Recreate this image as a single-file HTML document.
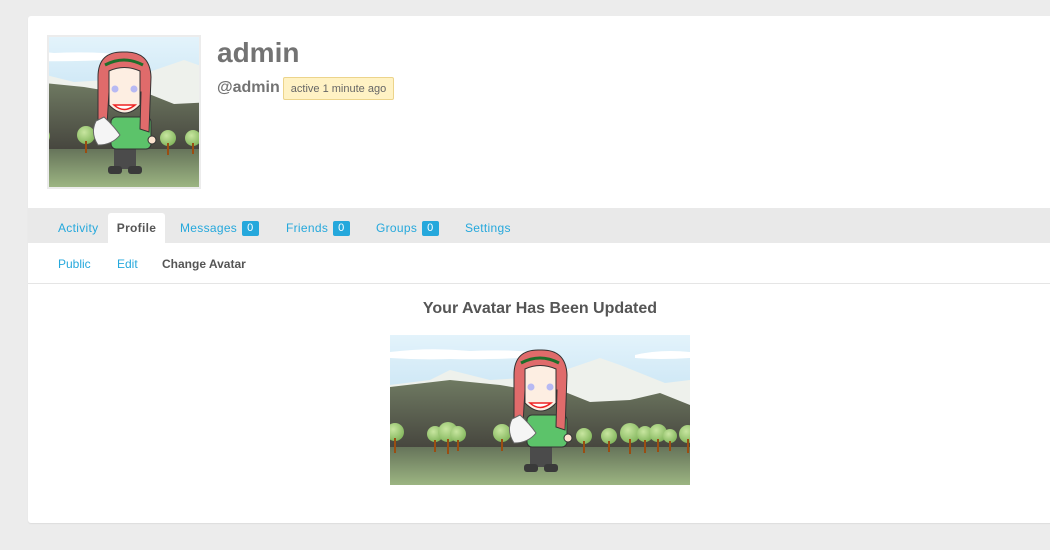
<!DOCTYPE html>
<html><head><meta charset="utf-8"><style>
body{margin:0;background:#ececec;font-family:"Liberation Sans",sans-serif;width:1050px;height:550px;overflow:hidden;position:relative}
.card{position:absolute;left:28px;top:16px;width:1040px;height:507px;background:#fff;border-radius:3px;box-shadow:0 1px 1px #ddd}
.av{position:absolute;left:19px;top:19px;width:150px;height:150px;border:2px solid #ececec}
.name{position:absolute;left:189px;top:21px;font-size:28px;font-weight:bold;color:#737373}
.handle{position:absolute;left:189px;top:63px;font-size:16px;font-weight:bold;color:#737373}
.badge{position:absolute;left:255px;top:61px;width:109px;height:21px;background:#fff2c4;border:1px solid #ecd48b;border-radius:2px;font-size:11px;color:#666;text-align:center;line-height:22px}
.nav{position:absolute;left:0;top:192px;width:1040px;height:35px;background:#e9e9e9}
.nav .t{position:absolute;top:0;font-size:12px;color:#25a8dc;line-height:41px;letter-spacing:.3px;white-space:nowrap}
.nav .act{background:#fff;color:#555;font-weight:bold;top:5px;line-height:30px;height:30px;border-radius:3px 3px 0 0;width:57px;text-align:center;left:80px}
.cnt{display:inline-block;background:#25a8dc;color:#fff;border-radius:2px;padding:0 5px;line-height:15px;margin-left:5px;font-size:11px;vertical-align:1px}
.sub span{position:absolute;top:241px;font-size:12px;color:#25a8dc}
.line{position:absolute;left:0;top:267px;width:1040px;height:1px;background:#e5e5e5}
h2{position:absolute;left:0;width:1024px;text-align:center;top:284px;margin:0;font-size:16px;font-weight:bold;color:#555}
.big{position:absolute;left:362px;top:319px;width:300px;height:150px}
</style></head><body>
<svg width="0" height="0" style="position:absolute"><defs>
<linearGradient id="sky" x1="0" y1="0" x2="0" y2="1"><stop offset="0" stop-color="#e3f3fb"/><stop offset="1" stop-color="#a9d3ec"/></linearGradient>
<linearGradient id="hill" x1="0" y1="0" x2="0" y2="1"><stop offset="0" stop-color="#6f7a62"/><stop offset="1" stop-color="#45443d"/></linearGradient>
<linearGradient id="gr" x1="0" y1="0" x2="0" y2="1"><stop offset="0" stop-color="#66745a"/><stop offset="1" stop-color="#9cb582"/></linearGradient>
<radialGradient id="tr" cx=".4" cy=".35" r=".7"><stop offset="0" stop-color="#c8e6a0"/><stop offset="1" stop-color="#80b45a"/></radialGradient>
<g id="scene">
<rect width="300" height="150" fill="url(#sky)"/>
<path d="M0 17 Q40 12 80 16 Q120 14 150 18 L150 22 Q100 25 60 24 Q30 25 0 23Z M245 20 Q270 14 300 17 L300 23 Q270 25 245 23Z" fill="#fff"/>
<path d="M0 50 L40 45 L60 35 L100 45 L150 42 L175 35 L210 23 L230 30 L255 40 L275 48 L300 45 L300 80 L0 80Z" fill="#eef1ec"/>
<path d="M0 52 L60 45 L110 50 L140 55 L170 55 L200 67 L240 65 L270 58 L300 70 L300 115 L0 115Z" fill="url(#hill)"/>
<rect y="112" width="300" height="38" fill="url(#gr)"/>
<g fill="url(#tr)">
<circle cx="5" cy="97" r="9"/><circle cx="45" cy="99" r="8"/><circle cx="58" cy="97" r="10"/><circle cx="68" cy="99" r="8"/><circle cx="112" cy="98" r="9"/><circle cx="194" cy="101" r="8"/><circle cx="219" cy="101" r="8"/><circle cx="240" cy="98" r="10"/><circle cx="255" cy="99" r="8"/><circle cx="268" cy="98" r="9"/><circle cx="280" cy="101" r="7"/><circle cx="298" cy="99" r="9"/></g>
<g stroke="#9a4e12" stroke-width="2"><path d="M5 103V118M45 105V117M58 104V119M68 105V116M112 104V116M194 106V118M219 106V117M240 104V119M255 105V118M268 104V117M280 106V116M298 104V118"/></g>
<rect x="140" y="108" width="22" height="24" fill="#4b4b4b"/>
<rect x="134" y="129" width="14" height="8" rx="3" fill="#3a3a3a"/><rect x="154" y="129" width="14" height="8" rx="3" fill="#3a3a3a"/>
<rect x="137" y="80" width="40" height="32" rx="5" fill="#5cc36a" stroke="#333"/>
<circle cx="128" cy="103" r="4" fill="#fbe3cf" stroke="#333"/><circle cx="178" cy="103" r="4" fill="#fbe3cf" stroke="#333"/>
<path d="M124 40 Q124 14 150 15 Q176 14 177 40 L175 95 L166 92 L167 55 L135 55 L133 88 L124 84Z" fill="#e06b6b" stroke="#333"/>
<path d="M135 34 Q150 27 166 34 L166 68 Q151 84 135 68Z" fill="#fdeee2" stroke="#333"/>
<path d="M131 28 Q150 18 169 28" fill="none" stroke="#1f6e2a" stroke-width="3"/>
<circle cx="141" cy="52" r="3.5" fill="#b7b9f3"/><circle cx="160" cy="52" r="3.5" fill="#b7b9f3"/>
<path d="M140 68 Q150 77 161 68Z" fill="#fff" stroke="#e22" stroke-width="1.5"/>
<path d="M122 84 Q116 96 124 108 Q138 108 146 98 Q139 88 130 80Z" fill="#f5f5f5" stroke="#666"/>
</g></defs></svg>
<div class="card">
<div class="av"><svg width="150" height="150" viewBox="75 0 150 150"><use href="#scene"/></svg></div>
<div class="name">admin</div>
<div class="handle">@admin</div>
<div class="badge">active 1 minute ago</div>
<div class="nav">
<span class="t" style="left:30px">Activity</span>
<span class="t act">Profile</span>
<span class="t" style="left:152px">Messages<span class="cnt">0</span></span>
<span class="t" style="left:258px">Friends<span class="cnt">0</span></span>
<span class="t" style="left:348px">Groups<span class="cnt">0</span></span>
<span class="t" style="left:437px">Settings</span>
</div>
<div class="sub"><span style="left:30px">Public</span><span style="left:89px">Edit</span><span style="left:134px;color:#555;font-weight:bold">Change Avatar</span></div>
<div class="line"></div>
<h2>Your Avatar Has Been Updated</h2>
<svg class="big" viewBox="0 0 300 150"><use href="#scene"/></svg>
</div>
</body></html>
